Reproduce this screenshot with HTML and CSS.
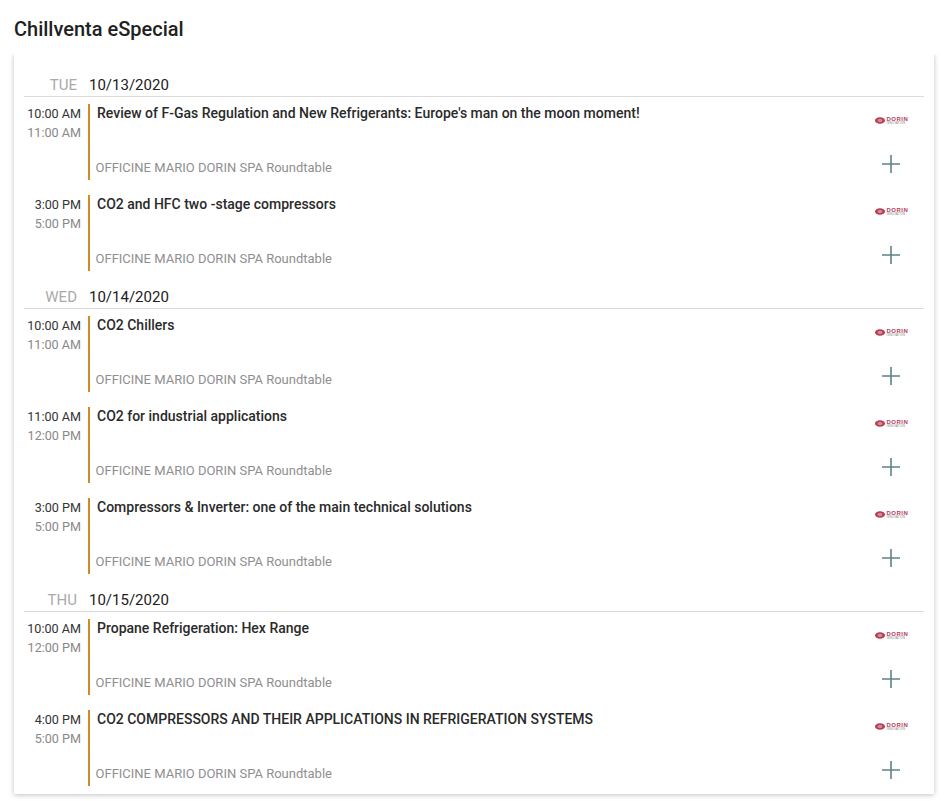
FILE: index.html
```html
<!DOCTYPE html>
<html lang="en">
<head>
<meta charset="utf-8">
<title>Chillventa eSpecial</title>
<link rel="stylesheet" href="styles.css">
</head>
<body>
<svg class="defs" width="0" height="0" aria-hidden="true">
  <symbol id="plus" viewBox="0 0 18 18">
    <path d="M9 0V18M0 9H18" stroke="#5f8288" stroke-width="1.6" fill="none"/>
  </symbol>
  <symbol id="mark" viewBox="0 0 10 7">
    <ellipse cx="5" cy="3.5" rx="5" ry="3.3" fill="#b23c56"/>
    <ellipse cx="5" cy="3.5" rx="2.6" ry="1.7" fill="#d48796"/>
  </symbol>
</svg>
<h1 class="title">Chillventa eSpecial</h1>
<main class="card">
  <section class="day">
    <header class="day-head"><span class="dow">TUE</span><span class="date">10/13/2020</span></header>
    <article class="row">
      <div class="times"><span class="start">10:00 AM</span><span class="end">11:00 AM</span></div>
      <div class="body"><div class="name">Review of F-Gas Regulation and New Refrigerants: Europe's man on the moon moment!</div><div class="meta">OFFICINE MARIO DORIN SPA Roundtable</div></div>
      <div class="side"><div class="logo"><svg class="mark"><use href="#mark"/></svg><div class="logo-text"><span class="logo-name">DORIN</span><span class="logo-sub">INNOVATION</span></div></div><svg class="plus"><use href="#plus"/></svg></div>
    </article>
    <article class="row">
      <div class="times"><span class="start">3:00 PM</span><span class="end">5:00 PM</span></div>
      <div class="body"><div class="name">CO2 and HFC two -stage compressors</div><div class="meta">OFFICINE MARIO DORIN SPA Roundtable</div></div>
      <div class="side"><div class="logo"><svg class="mark"><use href="#mark"/></svg><div class="logo-text"><span class="logo-name">DORIN</span><span class="logo-sub">INNOVATION</span></div></div><svg class="plus"><use href="#plus"/></svg></div>
    </article>
  </section>
  <section class="day">
    <header class="day-head"><span class="dow">WED</span><span class="date">10/14/2020</span></header>
    <article class="row">
      <div class="times"><span class="start">10:00 AM</span><span class="end">11:00 AM</span></div>
      <div class="body"><div class="name">CO2 Chillers</div><div class="meta">OFFICINE MARIO DORIN SPA Roundtable</div></div>
      <div class="side"><div class="logo"><svg class="mark"><use href="#mark"/></svg><div class="logo-text"><span class="logo-name">DORIN</span><span class="logo-sub">INNOVATION</span></div></div><svg class="plus"><use href="#plus"/></svg></div>
    </article>
    <article class="row">
      <div class="times"><span class="start">11:00 AM</span><span class="end">12:00 PM</span></div>
      <div class="body"><div class="name">CO2 for industrial applications</div><div class="meta">OFFICINE MARIO DORIN SPA Roundtable</div></div>
      <div class="side"><div class="logo"><svg class="mark"><use href="#mark"/></svg><div class="logo-text"><span class="logo-name">DORIN</span><span class="logo-sub">INNOVATION</span></div></div><svg class="plus"><use href="#plus"/></svg></div>
    </article>
    <article class="row">
      <div class="times"><span class="start">3:00 PM</span><span class="end">5:00 PM</span></div>
      <div class="body"><div class="name">Compressors &amp; Inverter: one of the main technical solutions</div><div class="meta">OFFICINE MARIO DORIN SPA Roundtable</div></div>
      <div class="side"><div class="logo"><svg class="mark"><use href="#mark"/></svg><div class="logo-text"><span class="logo-name">DORIN</span><span class="logo-sub">INNOVATION</span></div></div><svg class="plus"><use href="#plus"/></svg></div>
    </article>
  </section>
  <section class="day">
    <header class="day-head"><span class="dow">THU</span><span class="date">10/15/2020</span></header>
    <article class="row">
      <div class="times"><span class="start">10:00 AM</span><span class="end">12:00 PM</span></div>
      <div class="body"><div class="name">Propane Refrigeration: Hex Range</div><div class="meta">OFFICINE MARIO DORIN SPA Roundtable</div></div>
      <div class="side"><div class="logo"><svg class="mark"><use href="#mark"/></svg><div class="logo-text"><span class="logo-name">DORIN</span><span class="logo-sub">INNOVATION</span></div></div><svg class="plus"><use href="#plus"/></svg></div>
    </article>
    <article class="row">
      <div class="times"><span class="start">4:00 PM</span><span class="end">5:00 PM</span></div>
      <div class="body"><div class="name">CO2 COMPRESSORS AND THEIR APPLICATIONS IN REFRIGERATION SYSTEMS</div><div class="meta">OFFICINE MARIO DORIN SPA Roundtable</div></div>
      <div class="side"><div class="logo"><svg class="mark"><use href="#mark"/></svg><div class="logo-text"><span class="logo-name">DORIN</span><span class="logo-sub">INNOVATION</span></div></div><svg class="plus"><use href="#plus"/></svg></div>
    </article>
  </section>
</main>
</body>
</html>
```
FILE: styles.css
```css
html, body { margin: 0; padding: 0; background: #fff; }
body {
  font-family: Roboto, "Liberation Sans", sans-serif;
  color: #212121;
  height: 801px;
  overflow: hidden;
}
.defs { position: absolute; }
.title {
  margin: 0;
  padding: 18px 14px 0;
  height: 36px;
  font-size: 20px;
  line-height: 23px;
  font-weight: 500;
}
.card {
  margin: 0 12px 0 14px;
  height: 740px;
  box-sizing: border-box;
  padding: 20px 10px 0;
  background: #fff;
  box-shadow: 0 1px 5px rgba(0, 0, 0, .25);
  clip-path: inset(0 -8px -8px -8px);
}
.day-head {
  display: flex;
  height: 22px;
  margin-bottom: 7px;
  border-bottom: 1px solid #dcdcdc;
  align-items: center;
  font-size: 15px;
  line-height: 24px;
}
.dow { width: 53px; text-align: right; color: #aaa; }
.date { margin-left: 12px; color: #212121; }
.row {
  display: flex;
  height: 76px;
  margin-bottom: 15px;
}
.times {
  width: 57px;
  display: flex;
  flex-direction: column;
  align-items: flex-end;
  font-size: 12.6px;
  line-height: 19px;
}
.start { color: #333; }
.end { color: #888; }
.body {
  margin-left: 7px;
  border-left: 2px solid #d18a24;
  padding-left: 7px;
  flex: 1;
  display: flex;
  flex-direction: column;
  justify-content: space-between;
}
.name { font-size: 14px; line-height: 19px; color: #2a2a2a; font-weight: 500; }
.meta { font-size: 13px; line-height: 19px; color: #8f8f8f; margin-left: -1.5px; padding-bottom: 3px; }
.side {
  width: 36px;
  margin-right: 15px;
  display: flex;
  flex-direction: column;
  align-items: center;
}
.logo {
  width: 34px;
  height: 10px;
  margin: 11px 0 0 1px;
  display: flex;
  align-items: center;
  gap: 2px;
}
.mark { width: 10px; height: 7px; flex: none; }
.logo-text {
  display: flex;
  flex-direction: column;
  align-items: flex-start;
}
.logo-name {
  font-family: "Liberation Sans", sans-serif;
  font-size: 6px;
  line-height: 6px;
  font-weight: 700;
  letter-spacing: .5px;
  color: #b5405a;
}
.logo-sub {
  font-family: "Liberation Sans", sans-serif;
  font-size: 2.6px;
  line-height: 3px;
  letter-spacing: .3px;
  color: #777;
}
.plus { width: 18px; height: 18px; margin-top: 30px; }
```
